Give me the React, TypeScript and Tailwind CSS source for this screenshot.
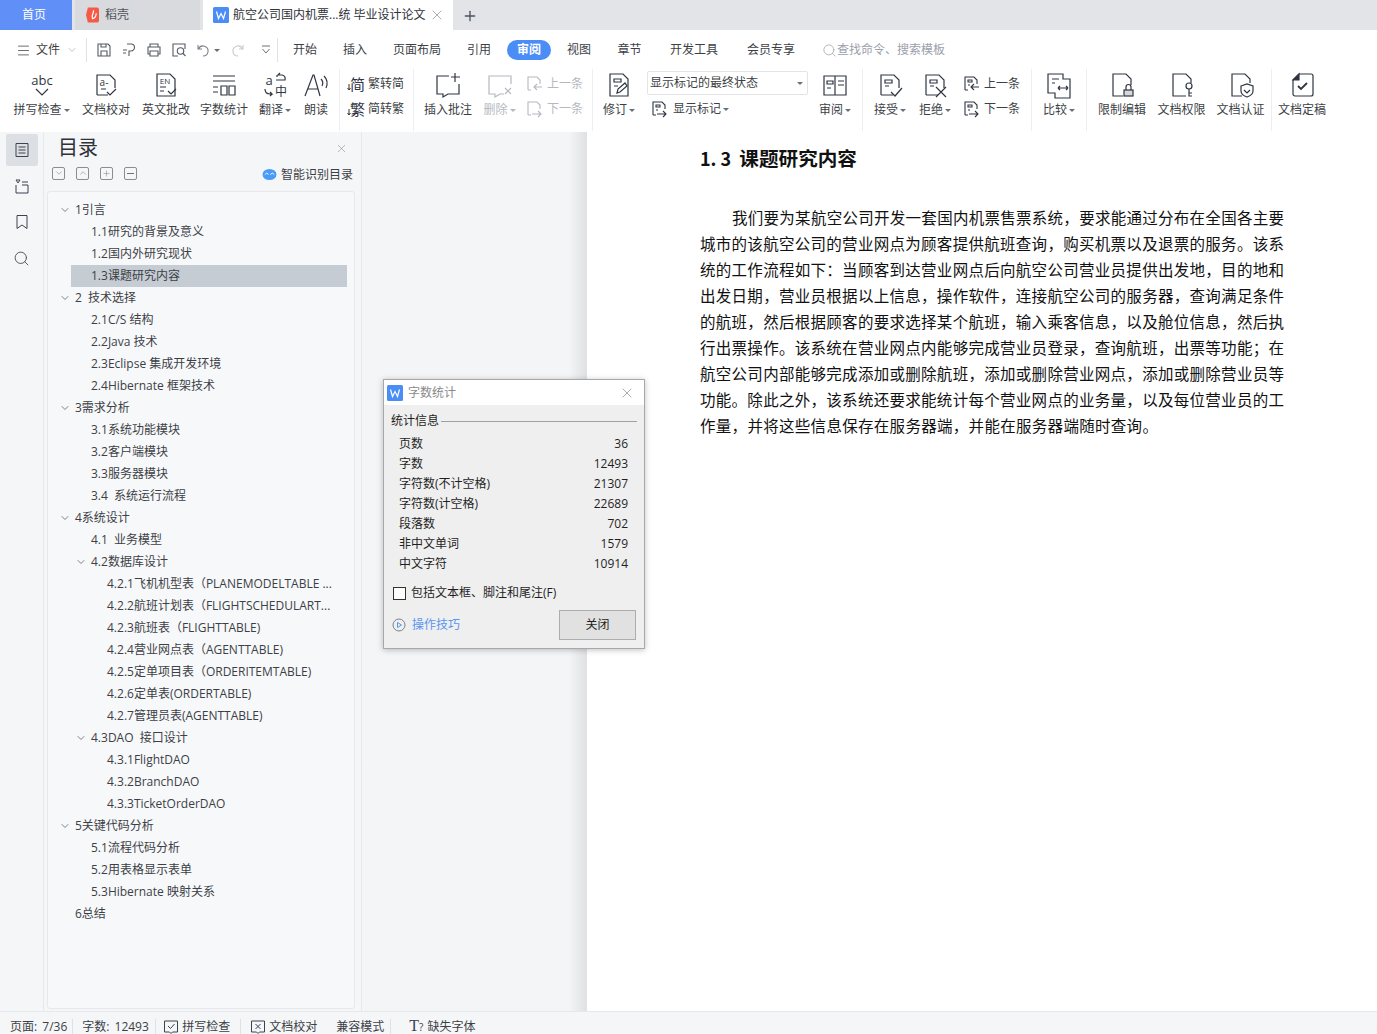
import type { ReactNode } from "react";
import { ChevronDown, Menu, Plus, Search, X } from "lucide-react";

const FONT = "font-['Open_Sans','Noto_Sans_CJK_SC',sans-serif]";

function Svg({ children, className = "w-7 h-7" }: { children: ReactNode; className?: string }) {
  return (
    <svg viewBox="0 0 28 28" fill="none" stroke="#2f3542" strokeWidth="1.2" className={className}>
      {children}
    </svg>
  );
}

function Caret({ light }: { light?: boolean }) {
  return <span className={"ml-0.5 inline-block border-x-[3px] border-t-[3px] border-x-transparent align-middle " + (light ? "border-t-[#b5b8bf]" : "border-t-[#6b7078]")} />;
}

function Tool({ w, label, icon, caret, disabled }: { w: string; label: string; icon: ReactNode; caret?: boolean; disabled?: boolean }) {
  return (
    <div className={"mt-[2px] flex shrink-0 flex-col items-center self-start " + w}>
      <div className="flex h-[30px] items-center justify-center">{icon}</div>
      <div className={"mt-[2px] whitespace-nowrap text-xs leading-4 " + (disabled ? "text-[#b5b8bf]" : "text-[#3c3f46]")}>
        {label}
        {caret && <Caret light={disabled} />}
      </div>
    </div>
  );
}

function Sep({ className = "mx-2" }: { className?: string }) {
  return <div className={"h-[62px] w-px shrink-0 bg-[#eceef1] " + className} />;
}

function MiniRow({ icon, label, disabled }: { icon: ReactNode; label: string; disabled?: boolean }) {
  return (
    <div className={"flex h-[25px] items-center gap-[3px] text-xs " + (disabled ? "text-[#b5b8bf]" : "text-[#3c3f46]")}>
      {icon}
      <span>{label}</span>
    </div>
  );
}

const docBase = <path d="M5 3h13l5 5v17H5z" />;

function MarkDoc({ mark }: { mark?: ReactNode }) {
  return (
    <Svg>
      <path d="M5 24V4h13l5 5v8M5 24h12" />
      <path d="M9 9h7v3H9zM9 15h4" />
      {mark}
    </Svg>
  );
}

function PrevNext({ dir, disabled }: { dir: "l" | "r"; disabled?: boolean }) {
  const c = disabled ? "#b5b8bf" : "#2f3542";
  return (
    <svg viewBox="0 0 18 18" fill="none" stroke={c} strokeWidth="1.1" className="h-[18px] w-[18px]">
      <path d="M2 15V2h9l3 3v4M2 15h3" />
      {!disabled && <path d="M5 5h4v2H5zM5 10h2" />}
      {dir === "l" ? <path d="M16 12H8m3-3-3 3 3 3" /> : <path d="M6 14h9m-3-3 3 3-3 3" />}
    </svg>
  );
}

function CharIcon({ ch }: { ch: string }) {
  return (
    <svg viewBox="0 0 18 18" fill="none" stroke="#2f3542" strokeWidth="1" className="h-[18px] w-[18px]">
      <text x="10.500" y="14.500" textAnchor="middle" fontSize="15" fill="#2f3542" stroke="none">{ch}</text>
      <path d="M2 9v6m-1.500-2L2 15l1.500-2" />
    </svg>
  );
}

const TOC: [number, string, boolean?, boolean?][] = [
  [0, "1引言", true],
  [1, "1.1研究的背景及意义"],
  [1, "1.2国内外研究现状"],
  [1, "1.3课题研究内容", false, true],
  [0, "2  技术选择", true],
  [1, "2.1C/S 结构"],
  [1, "2.2Java 技术"],
  [1, "2.3Eclipse 集成开发环境"],
  [1, "2.4Hibernate 框架技术"],
  [0, "3需求分析", true],
  [1, "3.1系统功能模块"],
  [1, "3.2客户端模块"],
  [1, "3.3服务器模块"],
  [1, "3.4  系统运行流程"],
  [0, "4系统设计", true],
  [1, "4.1  业务模型"],
  [1, "4.2数据库设计", true],
  [2, "4.2.1飞机机型表（PLANEMODELTABLE ..."],
  [2, "4.2.2航班计划表（FLIGHTSCHEDULART..."],
  [2, "4.2.3航班表（FLIGHTTABLE)"],
  [2, "4.2.4营业网点表（AGENTTABLE)"],
  [2, "4.2.5定单项目表（ORDERITEMTABLE)"],
  [2, "4.2.6定单表(ORDERTABLE)"],
  [2, "4.2.7管理员表(AGENTTABLE)"],
  [1, "4.3DAO  接口设计", true],
  [2, "4.3.1FlightDAO"],
  [2, "4.3.2BranchDAO"],
  [2, "4.3.3TicketOrderDAO"],
  [0, "5关键代码分析", true],
  [1, "5.1流程代码分析"],
  [1, "5.2用表格显示表单"],
  [1, "5.3Hibernate 映射关系"],
  [0, "6总结"],
];

const LINES = [
  "我们要为某航空公司开发一套国内机票售票系统，要求能通过分布在全国各主要",
  "城市的该航空公司的营业网点为顾客提供航班查询，购买机票以及退票的服务。该系",
  "统的工作流程如下：当顾客到达营业网点后向航空公司营业员提供出发地，目的地和",
  "出发日期，营业员根据以上信息，操作软件，连接航空公司的服务器，查询满足条件",
  "的航班，然后根据顾客的要求选择某个航班，输入乘客信息，以及舱位信息，然后执",
  "行出票操作。该系统在营业网点内能够完成营业员登录，查询航班，出票等功能；在",
  "航空公司内部能够完成添加或删除航班，添加或删除营业网点，添加或删除营业员等",
  "功能。除此之外，该系统还要求能统计每个营业网点的业务量，以及每位营业员的工",
];

const STATS = [
  ["页数", "36"],
  ["字数", "12493"],
  ["字符数(不计空格)", "21307"],
  ["字符数(计空格)", "22689"],
  ["段落数", "702"],
  ["非中文单词", "1579"],
  ["中文字符", "10914"],
];

const MENU = [
  ["开始", "w-[50px]"],
  ["插入", "w-[50px]"],
  ["页面布局", "w-[74px]"],
  ["引用", "w-[50px]"],
];
const MENU2 = [
  ["视图", "w-[50px]"],
  ["章节", "w-[51px]"],
  ["开发工具", "w-[78px]"],
  ["会员专享", "w-[76px]"],
];

function WpsLogo({ className }: { className: string }) {
  return (
    <svg viewBox="0 0 16 16" className={className}>
      <rect width="16" height="16" rx="1.500" fill="#4a8df6" />
      <path d="M3.500 4.500 5.500 11.500 8 6.500 10.500 11.500 12.500 4.500" fill="none" stroke="#fff" strokeWidth="1.200" />
    </svg>
  );
}

function SmallBox({ children }: { children: ReactNode }) {
  return <div className="flex h-[13px] w-[13px] items-center justify-center rounded-[2px] border border-[#8a8d93] text-[#6b6f76]">{children}</div>;
}

export default function App() {
  return (
    <div className={"relative flex h-[1034px] w-[1377px] flex-col overflow-hidden bg-white text-xs text-[#3c3f46] " + FONT}>
      {/* tabs */}
      <div className="flex h-[30px] shrink-0 bg-[#e2e4e8] pt-px">
        <div className="-mt-px flex w-[72px] items-center justify-center bg-[#5f8ff7] pr-1 text-white">首页</div>
        <div className="-mt-px ml-[3px] flex w-[125px] items-center gap-[6px] bg-[#d9dadd] pl-[11px] text-[#50535a]">
          <svg viewBox="0 0 14 16" className="h-4 w-[13px]">
            <path d="M2 0h10a2 2 0 0 1 2 2v12a2 2 0 0 1-2 2H2L0 8z" fill="#f45b46" />
            <path d="M8 3c1 3-3 5-1 9 3-1 4-3 4-6" fill="none" stroke="#fff" strokeWidth="1.3" />
          </svg>
          稻壳
        </div>
        <div className="-mt-px ml-[3px] flex w-[250px] items-center bg-white pl-[10px] text-[#2f3238]">
          <WpsLogo className="mr-[4px] h-4 w-4 shrink-0" />
          <span className="whitespace-nowrap">航空公司国内机票...统 毕业设计论文</span>
          <X className="ml-[3px] h-4 w-4 text-[#8a8f98]" strokeWidth={1.1} />
        </div>
        <Plus className="ml-[9px] mt-[7px] h-4 w-4 text-[#4a5263]" strokeWidth={2} />
      </div>

      {/* menu row */}
      <div className="flex h-[38px] shrink-0 items-center pl-4 pt-[2px] text-[#3c3f46]">
        <Menu className="h-[15px] w-[15px]" strokeWidth={1.2} />
        <span className="ml-[5px]">文件</span>
        <ChevronDown className="ml-[6px] h-3 w-3 text-[#a0a3a9]" strokeWidth={1.3} />
        <div className="mx-[8px] h-6 w-px bg-[#dfe1e5]" />
        <div className="ml-px flex items-center gap-[9px]">
          <svg viewBox="0 0 16 16" fill="none" stroke="#555a63" strokeWidth="1.1" className="h-4 w-4"><path d="M2 2h10l2 2v10H2zM5 14V9h6v5M5 2v3h5V2" /></svg>
          <svg viewBox="0 0 16 16" fill="none" stroke="#555a63" strokeWidth="1.1" className="h-4 w-4"><path d="M6 2h4a3.500 3.500 0 0 1 0 7H8v5M2 8h4M5 11H2" /></svg>
          <svg viewBox="0 0 16 16" fill="none" stroke="#555a63" strokeWidth="1.1" className="h-4 w-4"><path d="M4 5V2h8v3M4 12H2V5h12v7h-2M4 9h8v5H4z" /></svg>
          <svg viewBox="0 0 16 16" fill="none" stroke="#555a63" strokeWidth="1.1" className="h-4 w-4"><path d="M14 7V2H2v12h5" /><circle cx="9.500" cy="9" r="3.200" /><path d="m12 11.500 2.500 2.500" /></svg>
          <span className="flex items-center">
            <svg viewBox="0 0 16 16" fill="none" stroke="#7b8088" strokeWidth="1.1" className="h-4 w-4"><path d="M2 3v4h4M2.500 7A5 5 0 1 1 7 14" /></svg>
            <Caret />
          </span>
          <svg viewBox="0 0 16 16" fill="none" stroke="#c8cad0" strokeWidth="1.1" className="h-4 w-4"><path d="M14 3v4h-4M13.500 7A5 5 0 1 0 9 14" /></svg>
          <svg viewBox="0 0 12 12" fill="none" stroke="#6b7078" strokeWidth="1" className="ml-[6px] h-3 w-3"><path d="M2 2h8M2.500 5 6 9l3.500-4" /></svg>
        </div>
        <div className="ml-[5px] mr-[2px] h-6 w-px bg-[#dfe1e5]" />
        {MENU.map(([t, w]) => (
          <div key={t} className={"text-center " + w}>{t}</div>
        ))}
        <div className="ml-[3px] flex h-5 w-11 items-center justify-center rounded-full bg-[#4a8df6] font-semibold text-white">审阅</div>
        <div className="w-[3px]" />
        {MENU2.map(([t, w]) => (
          <div key={t} className={"text-center " + w}>{t}</div>
        ))}
        <Search className="ml-[13px] h-[15px] w-[15px] text-[#a3a9b5]" strokeWidth={1.3} />
        <span className="text-[#9aa0ab]">查找命令、搜索模板</span>
      </div>

      {/* ribbon */}
      <div className="flex h-[64px] shrink-0 items-center pl-[9px] shadow-[0_2px_3px_rgba(0,0,0,0.08)]">
        <Tool w="w-[65px]" label="拼写检查" caret icon={<Svg><text x="14" y="14" textAnchor="middle" fontSize="13" fill="#2f3542" stroke="none">abc</text><path d="m8 18 6 6 6-6" /></Svg>} />
        <Tool w="w-[64px]" label="文档校对" icon={<Svg><path d="M5 24V4h13l5 5v8M5 24h11" /><text x="12" y="15" textAnchor="middle" fontSize="10" fill="#2f3542" stroke="none">a-</text><path d="M9 18h5m1 3 3 3 6-6" /></Svg>} />
        <Tool w="w-[56px]" label="英文批改" icon={<Svg>{docBase}<text x="13" y="13" textAnchor="middle" fontSize="8" fill="#2f3542" stroke="none">EN</text><path d="M8 16h6M8 20h4m4 0 3 3 5-5" /></Svg>} />
        <Tool w="w-[60px]" label="字数统计" icon={<Svg><path d="M3 5h22M3 10h22M3 16h5M3 21h5" /><path d="M11 15h6v9h-6zM19 15h6v9h-6z" /></Svg>} />
        <Tool w="w-[42px]" label="翻译" caret icon={<Svg><text x="8" y="14" textAnchor="middle" fontSize="13" fill="#2f3542" stroke="none">a</text><path d="M15 9h9q1-4-3-5h-4l2-2M16 6V4M4 18c0 4 2 5 5 5h2l-2-2m2 2-2 2" /><text x="20" y="25" textAnchor="middle" fontSize="12" fill="#2f3542" stroke="none">中</text></Svg>} />
        <Tool w="w-[40px]" label="朗读" icon={<Svg><path d="m3 25 8-21h1l6 21M6 18h10M19 8q3 3 1 7M22 5q5 5 2 12" /></Svg>} />
        <Sep className="ml-[3px] mr-[7px]" />
        <div className="flex w-[58px] shrink-0 flex-col self-start pt-[3px]">
          <MiniRow label="繁转简" icon={<CharIcon ch="简" />} />
          <MiniRow label="简转繁" icon={<CharIcon ch="繁" />} />
        </div>
        <Sep className="ml-[8px] mr-[6px]" />
        <Tool w="w-[56px]" label="插入批注" icon={<Svg><path d="M15 5H3v18h6v3l5-3h11V13" /><path d="M21 2v9M17 6h9" /></Svg>} />
        <Tool w="w-[47px]" label="删除" caret disabled icon={<Svg><path d="M25 13V5H3v18h6v3l5-3h4" stroke="#b5b8bf" /><path d="m19 17 6 6m0-6-6 6" stroke="#b5b8bf" /></Svg>} />
        <div className="ml-[3px] flex w-[58px] shrink-0 flex-col self-start pt-[3px]">
          <MiniRow disabled label="上一条" icon={<PrevNext dir="l" disabled />} />
          <MiniRow disabled label="下一条" icon={<PrevNext dir="r" disabled />} />
        </div>
        <Sep className="ml-[8px] mr-0" />
        <Tool w="w-[52px]" label="修订" caret icon={<Svg><path d="M5 25V3h13l5 5v17z" /><path d="M9 8h7v3H9zM9 15h4M12 22l1-4 7-6 2 3-7 6z" /></Svg>} />
        <div className="ml-[2px] flex w-[161px] shrink-0 flex-col self-start pt-[3px]">
          <div className="flex h-6 items-center justify-between rounded-[2px] border border-[#e3e4e7] pl-[2px] pr-[4px]">
            显示标记的最终状态
            <Caret />
          </div>
          <div className="mt-[3px] flex h-[22px] items-center gap-[4px] pl-[4px]">
            <PrevNext dir="r" />
            <span>显示标记<Caret /></span>
          </div>
        </div>
        <Tool w="w-[54px]" label="审阅" caret icon={<Svg><path d="M3 5h22v19H3zM14 5v19M6 10h6v3H6zM6 17h4M17 10h6M17 14h6" /></Svg>} />
        <Sep className="mx-0" />
        <Tool w="w-[54px]" label="接受" caret icon={<MarkDoc mark={<path d="m15 21 4 4 7-8" />} />} />
        <Tool w="w-[36px]" label="拒绝" caret icon={<MarkDoc mark={<path d="m15 16 10 10m0-10L15 26" />} />} />
        <div className="ml-[10px] flex w-[58px] shrink-0 flex-col self-start pt-[3px]">
          <MiniRow label="上一条" icon={<PrevNext dir="l" />} />
          <MiniRow label="下一条" icon={<PrevNext dir="r" />} />
        </div>
        <Sep className="ml-[10px] mr-0" />
        <Tool w="w-[54px]" label="比较" caret icon={<Svg><path d="M3 3h15v5h7v19H10v-5H3z" /><path d="M7 8h7M7 12h3M13 17h10m-10 0 2-2m-2 2 2 2m8-2-2-2m2 2-2 2" /></Svg>} />
        <Sep className="ml-0 mr-[5px]" />
        <Tool w="w-[60px]" label="限制编辑" icon={<Svg><path d="M15 25H5V3h13l5 5v6" /><rect x="16" y="19" width="9" height="6" fill="#d6d8dc" /><path d="M18 19v-3a2.500 2.500 0 0 1 5 0v3" /></Svg>} />
        <Tool w="w-[59px]" label="文档权限" icon={<Svg><path d="M18 25H5V3h13l5 5v4" /><circle cx="21" cy="15" r="3" /><path d="M21 18v7h3M21 22h3" /></Svg>} />
        <Tool w="w-[59px]" label="文档认证" icon={<Svg><path d="M15 25H5V3h13l5 5v4" /><path d="M14 15l6-2 6 2v5q0 4-6 6-6-2-6-6z" /><path d="m17 19 3 3 3-3" /></Svg>} />
        <Sep className="ml-[1px] mr-0" />
        <Tool w="w-[60px]" label="文档定稿" icon={<Svg><path d="M11 3h12a2 2 0 0 1 2 2v18a2 2 0 0 1-2 2H7a2 2 0 0 1-2-2V9z" /><path d="M5 9h6V3z" fill="#2f3542" /><path d="m10 15 3 3 6-6" strokeWidth="1.800" /></Svg>} />
      </div>

      {/* body */}
      <div className="flex min-h-0 flex-1">
        <aside className="flex w-[44px] shrink-0 flex-col items-center border-r border-[#e6e8eb] bg-[#f5f6f8] pt-[2px]">
          <div className="flex h-8 w-8 items-center justify-center rounded-[2px] bg-[#dcdfe4]">
            <svg viewBox="0 0 16 16" fill="none" stroke="#3b4250" strokeWidth="1" className="h-4 w-4"><path d="M2 1.500h12v13H2zM4.500 5h7M4.500 8h7M4.500 11h7" /></svg>
          </div>
          {[
            <path key="a" d="M2 2h4l-2 3zM8 4h6M2 7v8h12V7H8" />,
            <path key="b" d="M3 1.500h10v13L8 11l-5 3.500z" />,
          ].map((p, i) => (
            <div key={i} className="mt-[4px] flex h-8 w-8 items-center justify-center">
              <svg viewBox="0 0 16 16" fill="none" stroke="#3b4250" strokeWidth="1" className="h-4 w-4">{p}</svg>
            </div>
          ))}
          <div className="mt-[4px] flex h-8 w-8 items-center justify-center">
            <Search className="h-[17px] w-[17px] text-[#3b4250]" strokeWidth={1.2} />
          </div>
        </aside>

        <section className="flex w-[318px] shrink-0 flex-col border-r border-[#e6e8eb] bg-[#f5f6f8]">
          <div className="flex h-[24px] items-center justify-between pl-[14px] pr-[13px] pt-[8px]">
            <span className="text-xl leading-6 text-[#2f3238]">目录</span>
            <X className="h-[13px] w-[13px] text-[#7d8188]" strokeWidth={1} />
          </div>
          <div className="mt-[10px] flex h-[14px] items-center pl-[8px] pr-[8px]">
            <div className="flex gap-[11px]">
              <SmallBox><ChevronDown className="h-[10px] w-[10px]" strokeWidth={1.2} /></SmallBox>
              <SmallBox><ChevronDown className="h-[10px] w-[10px] rotate-180" strokeWidth={1.2} /></SmallBox>
              <SmallBox><Plus className="h-[9px] w-[9px]" strokeWidth={1.2} /></SmallBox>
              <SmallBox><span className="h-px w-[7px] bg-[#6b6f76]" /></SmallBox>
            </div>
            <div className="ml-auto flex items-center gap-[4px] pt-[3px]">
              <svg viewBox="0 0 16 14" className="h-[13px] w-[15px]"><ellipse cx="8" cy="7" rx="7.500" ry="6" fill="#4a9bf6" /><path d="M3 7l2-1.500L7 7M9 7l2-1.500L13 7" fill="none" stroke="#fff" /></svg>
              智能识别目录
            </div>
          </div>
          <div className="mb-[2px] ml-[3px] mr-[6px] mt-[11px] flex-1 rounded-[3px] border border-[#e6e8eb] bg-[#f7f8fa] pt-[7px]">
            {TOC.map(([lvl, text, arrow, active], i) => (
              <div
                key={i}
                className={"relative flex h-[22px] items-center whitespace-pre " + (lvl === 0 ? "pl-[27px]" : lvl === 1 ? "pl-[43px]" : "pl-[59px]")}
              >
                {active && <div className="absolute inset-y-0 left-[23px] right-[7px] bg-[#c5ccd3]" />}
                {arrow && (
                  <ChevronDown
                    className={"absolute h-3 w-3 text-[#4a4d54] " + (lvl === 0 ? "left-[11px]" : "left-[27px]")}
                    strokeWidth={1.4}
                  />
                )}
                <span className="relative">{text}</span>
              </div>
            ))}
          </div>
        </section>

        {/* document area */}
        <main className="flex min-w-0 flex-1 bg-[#f3f5f7]">
          <div className="w-[225px] shrink-0 bg-gradient-to-r from-[#f3f5f7] from-92% to-[#dfe0e2]" />
          <div className="flex-1 bg-white pl-[113px] pr-[93px] font-['Noto_Sans_CJK_SC',sans-serif] text-[15.5px] leading-[26px] text-[#111]">
            <h2 className="mt-[14px] whitespace-pre text-lg font-bold leading-6">1. 3  <span className="text-[19.6px]">课题研究内容</span></h2>
            <div className="mt-[34px]">
              {LINES.map((line, i) => (
                <p key={i} className={"text-justify [text-align-last:justify] " + (i === 0 ? "pl-8" : "")}>{line}</p>
              ))}
              <p className="tracking-[0.3px]">作量，并将这些信息保存在服务器端，并能在服务器端随时查询。</p>
            </div>
          </div>
        </main>
      </div>

      {/* status bar */}
      <div className="flex h-[23px] shrink-0 items-center border-t border-[#e6e8eb] bg-[#f5f6f8] pl-[10px] pt-[7px] [word-spacing:2px]">
        <span>页面: 7/36</span>
        <span className="ml-[5px] mr-[9px] h-4 w-px bg-[#dfe1e5]" />
        <span className="w-[66px] whitespace-pre">字数: 12493</span>
        <span className="mx-[7px] h-4 w-px bg-[#dfe1e5]" />
        <svg viewBox="0 0 16 16" fill="none" stroke="#3b4250" strokeWidth="1" className="mr-[3px] h-4 w-4"><path d="M1.500 2h13v11h-5L8 14.500 6.500 13h-5zM5 7l2.500 2.500L11.500 5" /></svg>
        拼写检查
        <span className="ml-[10px] mr-[9px] h-4 w-px bg-[#dfe1e5]" />
        <svg viewBox="0 0 16 16" fill="none" stroke="#3b4250" strokeWidth="1" className="mr-[3px] h-4 w-4"><path d="M1.500 2h13v11h-5L8 14.500 6.500 13h-5zM5.500 5l5 5m0-5-5 5" /></svg>
        文档校对
        <span className="ml-[19px]">兼容模式</span>
        <span className="mx-[6px] h-4 w-px bg-[#dfe1e5]" />
        <span className="ml-[12px] mr-[4px] flex items-baseline text-[#3b4250]"><span className="font-['Liberation_Serif',serif] text-base leading-4">T</span><span className="text-[10px]">?</span></span>
        缺失字体
      </div>

      {/* word count dialog */}
      <div className="absolute left-[383px] top-[379px] flex h-[270px] w-[262px] flex-col border border-[#a8a8a8] bg-[#efefef] shadow-[0_1px_6px_rgba(0,0,0,0.25)]">
        <div className="flex h-[25px] shrink-0 items-center bg-white pl-[3px] pr-[9px] text-[#8a8a8a]">
          <WpsLogo className="mr-[5px] h-4 w-4" />
          字数统计
          <X className="ml-auto h-4 w-4 text-[#7d8188]" strokeWidth={1} />
        </div>
        <div className="mt-[8px] flex items-center pl-[7px] pr-[7px] text-[#1f1f1f]">
          统计信息
          <div className="ml-[2px] h-px flex-1 bg-[#a0a0a0]" />
        </div>
        <div className="mt-[5px] pl-[15px] pr-[16px] text-[#1f1f1f]">
          {STATS.map(([k, v]) => (
            <div key={k} className="flex h-5 items-center justify-between">
              <span>{k}</span>
              <span>{v}</span>
            </div>
          ))}
        </div>
        <label className="mt-[11px] flex items-center pl-[9px] text-[#1f1f1f]">
          <span className="mr-[5px] h-[13px] w-[13px] border border-[#333] bg-white" />
          包括文本框、脚注和尾注(F)
        </label>
        <div className="mt-[9px] flex items-center pl-[8px] pr-[8px]">
          <svg viewBox="0 0 14 14" fill="none" stroke="#7d8188" className="mr-[6px] h-[14px] w-[14px]"><circle cx="7" cy="7" r="6" /><path d="M5.500 4.500v5l4-2.500z" stroke="#5b95f0" /></svg>
          <span className="text-[#5b95f0]">操作技巧</span>
          <div className="ml-auto flex h-[30px] w-[77px] items-center justify-center border border-[#adadad] bg-[#e1e1e1] text-[#1f1f1f]">关闭</div>
        </div>
      </div>
    </div>
  );
}
